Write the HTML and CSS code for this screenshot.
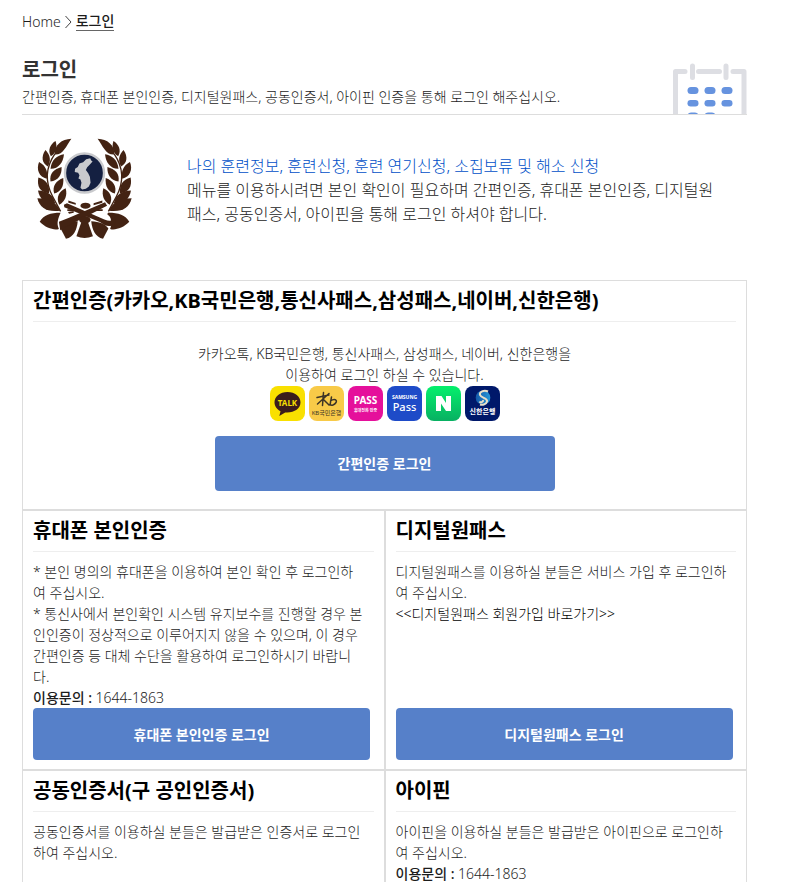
FILE: index.html
```html
<!DOCTYPE html>
<html lang="ko">
<head>
<meta charset="utf-8">
<meta name="viewport" content="width=device-width, initial-scale=1">
<title>로그인</title>
<link rel="stylesheet" href="styles.css">
</head>
<body>
<nav class="crumbs" aria-label="breadcrumb">
  <a href="#">Home</a>
  <svg class="crumb-arrow" viewBox="0 0 7 14" aria-hidden="true"><path d="M.5 1l5.500 6-5.500 6"/></svg>
  <a class="current" href="#">로그인</a>
</nav>
<header class="page-head">
  <div>
    <h1>로그인</h1>
    <p>간편인증, 휴대폰 본인인증, 디지털원패스, 공동인증서, 아이핀 인증을 통해 로그인 해주십시오.</p>
  </div>
  <svg class="calendar" viewBox="0 0 75 51" aria-hidden="true">
    <g fill="none" stroke="#dddee3" stroke-width="5">
      <path d="M3.500 52V8.500H13" stroke-linecap="round" stroke-linejoin="round"/>
      <path d="M26.500 8.500h21M61 8.500h11V52" stroke-linecap="round" stroke-linejoin="round"/>
      <path d="M20.500 3v11.500M54 3v11.500" stroke-linecap="round"/>
    </g>
    <g fill="#6693df">
      <rect x="15.500" y="24" width="11" height="7" rx="3.500"/><rect x="32.500" y="24" width="11" height="7" rx="3.500"/><rect x="49.500" y="24" width="11" height="7" rx="3.500"/>
      <rect x="15.500" y="37" width="11" height="6.500" rx="3.200"/><rect x="32.500" y="37" width="11" height="6.500" rx="3.200"/><rect x="49.500" y="37" width="11" height="6.500" rx="3.200"/>
      <rect x="15.500" y="49.500" width="11" height="7" rx="3.500"/><rect x="32.500" y="49.500" width="11" height="7" rx="3.500"/>
    </g>
  </svg>
</header>
<main>
  <section class="intro">
    <svg class="emblem" viewBox="48 28 288 300" role="img" aria-label="예비군">
      <defs>
        <g id="branch">
          <path d="M153 30C124 31 103 48 103 77C129 79 137 52 153 30Z"/>
          <path d="M106 37C90 47 82 64 92 82C108 73 112 56 106 37Z"/>
          <path d="M76 64C62 85 66 103 83 113C93 97 91 79 76 64Z"/>
          <path d="M131 76C111 79 93 93 91 119C114 120 129 101 131 76Z"/>
          <path d="M57 99C48 122 57 143 80 149C84 126 77 110 57 99Z"/>
          <path d="M124 114C101 120 87 134 91 157C113 154 125 139 124 114Z"/>
          <path d="M55 145C50 171 60 190 87 192C88 165 79 153 55 145Z"/>
          <path d="M129 147C108 154 95 172 102 193C122 188 131 172 129 147Z"/>
          <path d="M54 184C58 211 77 224 105 222C99 195 82 186 54 184Z"/>
          <path d="M136 177C117 186 106 204 117 226C134 216 142 199 136 177Z"/>
          <path d="M52 207C59 235 80 249 120 244C106 216 86 207 52 207Z"/>
          <path d="M121 250C91 250 70 257 59 277C77 296 103 303 116 298C108 281 114 266 121 250Z"/>
          <path d="M172 275C148 276 130 283 121 297L137 327C160 322 169 302 172 275Z"/>
          <path d="M104 75C76 116 75 159 97 201L121 246" fill="none" stroke="#432313" stroke-width="4"/>
        </g>
      </defs>
      <g fill="#432313">
        <use href="#branch"/>
        <use href="#branch" transform="matrix(-1 0 0 1 384 0)"/>
        <path d="M183 277h19l15 43q-25 10-49 0z"/>
        <path d="M131 226l9-4 111 48q21 8 24-1l-16-15 5-5c21 12 26 27 15 36-13 9-28 3-40-7L132 234z"/>
        <path d="M253 219l6 10-126 65-13 8-4-25 32-13z"/>
        <ellipse cx="195" cy="229" rx="15" ry="9"/>
        <ellipse cx="193" cy="271" rx="17" ry="11"/>
        <path d="M144 214l22 7v5l-22-6zM141 240h17v5h-17zM143 248l17-3v5l-14 3zM219 222l26-8v6l-26 8zM228 240h18v5h-18z"/>
      </g>
      <circle cx="192" cy="132" r="58" fill="#142041" stroke="#c9cacd" stroke-width="7"/>
      <path d="M209 88l3 7 4 3-8 9-8 8-4 8 7 10 5 10 2 18-5 11-9 7-11 2-5-5 3-15-3-10-6-3 3-9-4-8-10-2 1-10 8-5 5-10 11-4 9-9z" fill="#c9cacd"/>
    </svg>
    <p><strong>나의 훈련정보, 훈련신청, 훈련 연기신청, 소집보류 및 해소 신청</strong><br>메뉴를 이용하시려면 본인 확인이 필요하며 간편인증, 휴대폰 본인인증, 디지털원<br>패스, 공동인증서, 아이핀을 통해 로그인 하셔야 합니다.</p>
  </section>
  <div class="methods">
    <section class="method wide">
      <h2>간편인증(카카오,KB국민은행,통신사패스,삼성패스,네이버,신한은행)</h2>
      <p>카카오톡, KB국민은행, 통신사패스, 삼성패스, 네이버, 신한은행을<br>이용하여 로그인 하실 수 있습니다.</p>
      <div class="providers">
        <svg viewBox="0 0 35 35"><rect width="35" height="35" rx="8" fill="#f9e000"/><path d="M17.500 6C10 6 4.500 10.500 4.500 16.300c0 3.900 2.300 7.100 6 8.900L9.300 30l5.900-3.500c8.500.8 15.300-3.700 15.300-10.200C30.500 10.500 25 6 17.500 6z" fill="#3b1d1c"/><text x="17.500" y="19.800" class="t-talk">TALK</text></svg>
        <svg viewBox="0 0 35 35"><rect width="35" height="35" rx="8" fill="#f8ca48"/><path d="M8 11.500l12-2.500M14.500 6.500l-1 13M20 7.500L8.500 18M14 13l6 6M22.500 11l-1.500 8M21.500 15c4-3 7-1 5.500 1.500S22.500 20 21 18.500" fill="none" stroke="#3d3426" stroke-width="1.500" stroke-linecap="round"/><text x="17.500" y="29" class="t-kb">KB국민은행</text></svg>
        <svg viewBox="0 0 35 35"><rect width="35" height="35" rx="8" fill="#e5109b"/><text x="17.500" y="18" class="t-pass">PASS</text><text x="17.500" y="26" class="t-sub">휴대전화 인증</text></svg>
        <svg viewBox="0 0 35 35"><rect width="35" height="35" rx="8" fill="#1e4bc8"/><text x="17.500" y="13" class="t-samsung">SAMSUNG</text><text x="17.500" y="24.500" class="t-spass">Pass</text></svg>
        <svg viewBox="0 0 35 35"><defs><linearGradient id="green" x2="0" y2="1"><stop stop-color="#04f06c"/><stop offset="1" stop-color="#08b062"/></linearGradient></defs><rect width="35" height="35" rx="8" fill="url(#green)"/><path d="M10 10h5.500l4.500 7v-7h5v15h-5l-5-7.500V25h-5z" fill="#fff"/></svg>
        <svg viewBox="0 0 35 35"><defs><linearGradient id="globe" x2="1"><stop stop-color="#1557a8"/><stop offset="1" stop-color="#2699d8"/></linearGradient></defs><rect width="35" height="35" rx="8" fill="#00186a"/><circle cx="18" cy="11.700" r="7.300" fill="url(#globe)"/><path d="M23 5.500c-4-2-9 .3-8 3.500s8 3 7 6.500-5 3.700-7 3M14.500 15.500c1 1.500 4 .5 3.500-1.500" fill="none" stroke="#e8dfc8" stroke-width="2"/><text x="17.500" y="28" class="t-shinhan">신한은행</text></svg>
      </div>
      <button type="button">간편인증 로그인</button>
    </section>
    <section class="method">
      <h2>휴대폰 본인인증</h2>
      <p>* 본인 명의의 휴대폰을 이용하여 본인 확인 후 로그인하<br>여 주십시오.<br>* 통신사에서 본인확인 시스템 유지보수를 진행할 경우 본<br>인인증이 정상적으로 이루어지지 않을 수 있으며, 이 경우<br>간편인증 등 대체 수단을 활용하여 로그인하시기 바랍니<br>다.<br><b>이용문의 :</b> 1644-1863</p>
      <button type="button">휴대폰 본인인증 로그인</button>
    </section>
    <section class="method">
      <h2>디지털원패스</h2>
      <p>디지털원패스를 이용하실 분들은 서비스 가입 후 로그인하<br>여 주십시오.<br><a href="#">&lt;&lt;디지털원패스 회원가입 바로가기&gt;&gt;</a></p>
      <button type="button">디지털원패스 로그인</button>
    </section>
    <section class="method">
      <h2>공동인증서(구 공인인증서)</h2>
      <p>공동인증서를 이용하실 분들은 발급받은 인증서로 로그인<br>하여 주십시오.</p>
      <button type="button">공동인증서 로그인</button>
    </section>
    <section class="method">
      <h2>아이핀</h2>
      <p>아이핀을 이용하실 분들은 발급받은 아이핀으로 로그인하<br>여 주십시오.<br><b>이용문의 :</b> 1644-1863</p>
      <button type="button">아이핀 로그인</button>
    </section>
  </div>
</main>
</body>
</html>
```
FILE: styles.css
```css
* { box-sizing: border-box; }
html { scrollbar-width: none; }
body {
  margin: 0;
  padding: 11px 48px 0 22px;
  font: 300 14px/21px "Noto Sans", "Noto Sans CJK KR", sans-serif;
  color: #1c1c1c;
  background: #fff;
}
h1, h2, p { margin: 0; }
a { color: inherit; text-decoration: none; }
.crumbs { display: flex; align-items: center; gap: 4px; }
.crumbs .current { font-weight: 500; line-height: 18px; border-bottom: 1px solid #666; }
.crumb-arrow { width: 7px; height: 14px; fill: none; stroke: #444; }
.page-head {
  display: flex;
  justify-content: space-between;
  align-items: flex-end;
  margin-top: 24px;
  border-bottom: 1px solid #ddd;
}
.page-head h1 { color: #333; font-size: 20px; line-height: 28px; font-weight: 700; }
.page-head p { padding: 2px 0 7px; }
.calendar { display: block; flex: none; width: 75px; height: 51px; }
.intro { display: flex; gap: 54px; padding: 23px 0 41px 14px; }
.emblem { flex: none; width: 97px; height: 101px; }
.intro p { padding-top: 16px; font-size: 16px; line-height: 24px; }
.intro strong { font-weight: 300; color: #0050c8; }
.methods { display: grid; grid-template-columns: 1fr 1fr; }
.method {
  display: flex;
  flex-direction: column;
  min-height: 260px;
  padding: 0 10px 9px;
  border: 1px solid #ddd;
}
.method h2 {
  padding: 6px 0;
  border-bottom: 1px solid #eee;
  color: #000;
  font-size: 20px;
  line-height: 28px;
  font-weight: 700;
}
.method p { padding-top: 9px; }
.method b { font-weight: 500; }
.method a { color: #000; }
.method button {
  width: 99%;
  height: 52px;
  margin-top: auto;
  border: 0;
  border-radius: 4px;
  background: #5680c9;
  color: #fff;
  font: inherit;
  font-weight: 700;
}
.wide { grid-column: 1 / -1; min-height: 230px; align-items: center; padding-bottom: 18px; }
.wide h2 { align-self: stretch; }
.wide p { padding-top: 21px; text-align: center; }
.wide button { width: 340px; height: 55px; }
.providers { display: flex; gap: 4px; padding-top: 1px; }
.providers svg { width: 35px; height: 35px; }
.providers text { text-anchor: middle; fill: #fff; font-weight: 700; }
.providers .t-talk { font-size: 8px; fill: #f9e000; }
.providers .t-kb { font-size: 6px; font-weight: 400; fill: #3d3426; }
.providers .t-pass { font-size: 10px; }
.providers .t-sub { font-size: 4px; }
.providers .t-samsung { font-size: 5px; }
.providers .t-spass { font-size: 11px; font-weight: 500; }
.providers .t-shinhan { font-size: 7px; }
```
